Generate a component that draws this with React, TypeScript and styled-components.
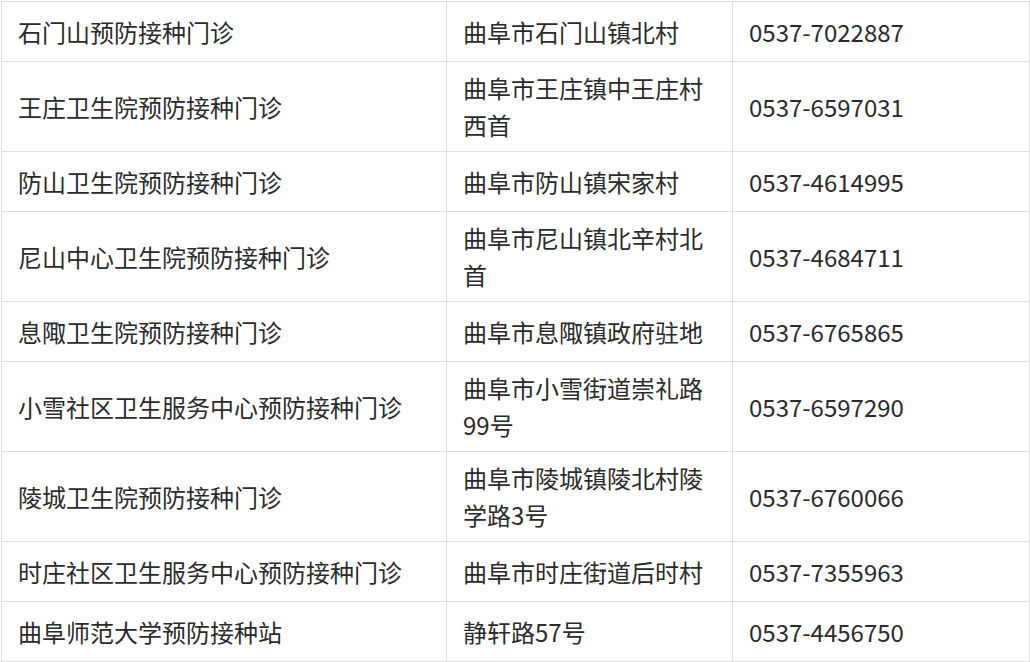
import styled, { createGlobalStyle } from "styled-components";

const GlobalStyle = createGlobalStyle`
  html, body {
    margin: 0;
    padding: 0;
    background: #ffffff;
  }
`;

const Page = styled.div`
  padding: 1px 0 0 1px;
  width: 1030px;
  box-sizing: border-box;
`;

const Table = styled.table`
  border-collapse: collapse;
  table-layout: fixed;
  width: 1028px;
  font-family: "Noto Sans CJK SC", "Noto Sans", sans-serif;
  font-size: 24px;
  color: #2b2b2b;
`;

const Col = styled.col<{ $w: number }>`
  width: ${(p) => p.$w}px;
`;

const Row = styled.tr`
  height: 60px;
`;

const Cell = styled.td`
  border: 1px solid #dedede;
  padding: 7px 16px 8px 16px;
  line-height: 37px;
  vertical-align: middle;
  word-break: break-all;
`;

const rows: [string, string, string][] = [
  ["石门山预防接种门诊", "曲阜市石门山镇北村", "0537-7022887"],
  ["王庄卫生院预防接种门诊", "曲阜市王庄镇中王庄村西首", "0537-6597031"],
  ["防山卫生院预防接种门诊", "曲阜市防山镇宋家村", "0537-4614995"],
  ["尼山中心卫生院预防接种门诊", "曲阜市尼山镇北辛村北首", "0537-4684711"],
  ["息陬卫生院预防接种门诊", "曲阜市息陬镇政府驻地", "0537-6765865"],
  ["小雪社区卫生服务中心预防接种门诊", "曲阜市小雪街道崇礼路99号", "0537-6597290"],
  ["陵城卫生院预防接种门诊", "曲阜市陵城镇陵北村陵学路3号", "0537-6760066"],
  ["时庄社区卫生服务中心预防接种门诊", "曲阜市时庄街道后时村", "0537-7355963"],
  ["曲阜师范大学预防接种站", "静轩路57号", "0537-4456750"],
];

export default function App() {
  return (
    <Page>
      <GlobalStyle />
      <Table>
        <colgroup>
          <Col $w={445} />
          <Col $w={286} />
          <Col $w={297} />
        </colgroup>
        <tbody>
          {rows.map(([name, addr, phone]) => (
            <Row key={name}>
              <Cell>{name}</Cell>
              <Cell>{addr}</Cell>
              <Cell>{phone}</Cell>
            </Row>
          ))}
        </tbody>
      </Table>
    </Page>
  );
}
